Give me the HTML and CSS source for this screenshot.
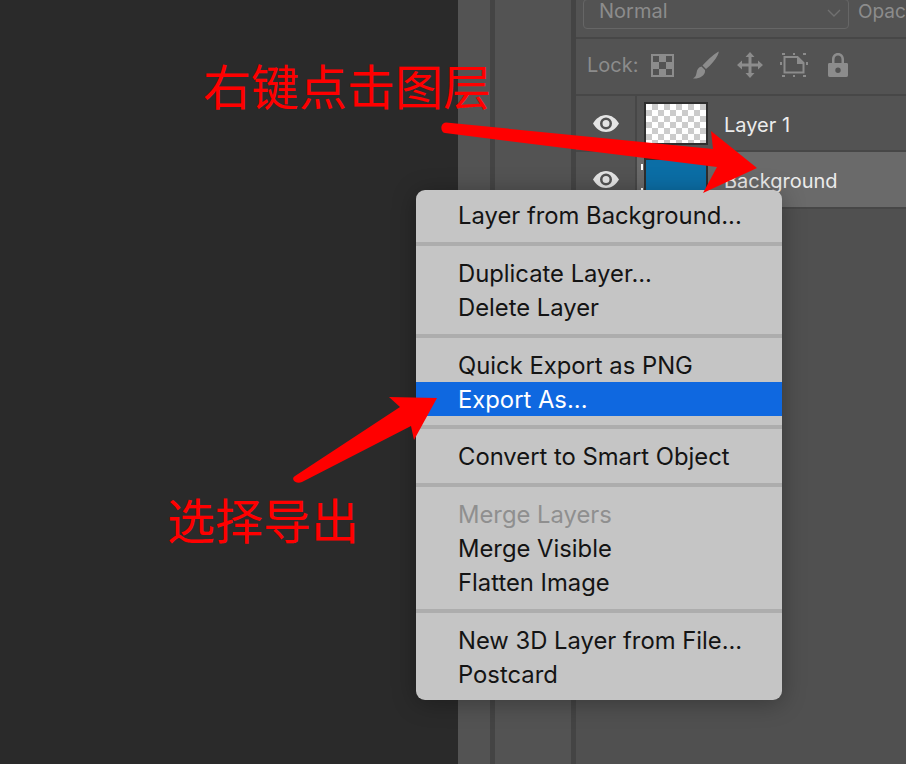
FILE: index.html
```html
<!DOCTYPE html>
<html lang="en">
<head>
    <meta charset="UTF-8">
    <meta name="viewport" content="width=device-width, initial-scale=1.0">
    <title>Export layer</title>
    <link rel="stylesheet" href="styles.css">
</head>
<body>
    <div class="workspace">
        <div class="canvas"></div>
        <div class="strip strip-narrow"></div>
        <div class="strip strip-wide"></div>
        <div class="panel">
            <div class="blend-row">
                <div class="blend-select">
                    <span>Normal</span>
                    <svg class="chevron" width="14" height="8" viewBox="0 0 14 8"><path d="M1 1l6 6 6-6" fill="none" stroke="#707070" stroke-width="1.4"/></svg>
                </div>
                <span class="opacity-label">Opac</span>
            </div>
            <div class="lock-row">
                <span class="lock-label">Lock:</span>
                <div class="lock-cell">
                    <svg width="23" height="23" viewBox="0 0 23 23">
                        <path fill="#8c8c8c" fill-rule="evenodd" d="M0 0h23v23H0zM2 2v6h6V2zM15 2v6h6V2zM8 8v7h7V8zM2 15v6h6v-6zM15 15v6h6v-6z"/>
                    </svg>
                </div>
                <div class="lock-cell">
                    <svg width="26" height="28" viewBox="0 0 26 28">
                        <path fill="#8c8c8c" d="M25.500 0.500C26 1 25.500 2.500 24.500 4.500 22 9 18.500 13.500 13 18L9.500 14.500C14 9.500 19.500 4 25.500 0.500zM8.500 15.500L12 19C12.500 22 10.500 25 7 26.500 4.500 27.500 2.500 27.500 0 27.500 2.500 26 3 24.500 3.500 22 4 18.500 5.500 16 8.500 15.500z"/>
                    </svg>
                </div>
                <div class="lock-cell">
                    <svg width="26" height="26" viewBox="0 0 26 26">
                        <path fill="#8c8c8c" d="M13 0l4.500 5H14.500v6.500H21V8.500L26 13l-5 4.500V14.500H14.500V21h3L13 26l-4.500-5h3V14.500H5v3L0 13l5-4.500v3h6.500V5h-3z"/>
                    </svg>
                </div>
                <div class="lock-cell">
                    <svg width="28" height="24" viewBox="0 0 28 24">
                        <path fill="none" stroke="#8c8c8c" stroke-width="2" d="M4.500 4h13l6 6v9.500h-19z"/>
                        <path fill="#8c8c8c" d="M17 4h1l6 6v1h-7z"/>
                        <path fill="#8c8c8c" d="M2 0h3v2H2zM23 0h3v2h-3zM0 9h2v3H0zM26 9h2v3h-2zM2 22h3v2H2zM23 22h3v2h-3zM13 22h2v2h-2zM13 0h2v2h-2z"/>
                    </svg>
                </div>
                <div class="lock-cell">
                    <svg width="20" height="24" viewBox="0 0 20 24">
                        <path fill="#8c8c8c" fill-rule="evenodd" d="M4 10V6.500C4 2.500 6.500 0 10 0s6 2.500 6 6.500V10h2.500c1 0 1.500.5 1.500 1.500V22c0 1-.5 2-1.500 2h-17C.5 24 0 23 0 22V11.500C0 10.500.5 10 1.500 10zM6.500 10h7V6.500c0-2.500-1.500-4-3.500-4s-3.500 1.500-3.500 4zM10 14.500a2.700 2.700 0 1 0 0 5.400 2.700 2.700 0 0 0 0-5.400z"/>
                    </svg>
                </div>
            </div>
            <div class="layer-row">
                <div class="eye-cell">
                    <svg width="26" height="17" viewBox="0 0 26 17"><path fill="#e4e4e4" fill-rule="evenodd" d="M13 0c5.500 0 10 3.500 13 8.500-3 5-7.500 8.500-13 8.500S3 13.500 0 8.500C3 3.500 7.500 0 13 0zM13 2.500a6 6 0 1 0 0 12 6 6 0 0 0 0-12zM13 5a3.500 3.500 0 1 1 0 7 3.500 3.500 0 0 1 0-7z"/></svg>
                </div>
                <div class="thumb thumb-empty"></div>
                <span class="layer-name">Layer 1</span>
            </div>
            <div class="layer-row layer-active">
                <div class="eye-cell">
                    <svg width="26" height="17" viewBox="0 0 26 17"><path fill="#e4e4e4" fill-rule="evenodd" d="M13 0c5.500 0 10 3.500 13 8.500-3 5-7.500 8.500-13 8.500S3 13.500 0 8.500C3 3.500 7.500 0 13 0zM13 2.500a6 6 0 1 0 0 12 6 6 0 0 0 0-12zM13 5a3.500 3.500 0 1 1 0 7 3.500 3.500 0 0 1 0-7z"/></svg>
                </div>
                <div class="thumb thumb-blue"></div>
                <span class="layer-name">Background</span>
            </div>
        </div>
    </div>

    <div class="menu">
        <div class="menu-item">Layer from Background...</div>
        <div class="menu-sep"></div>
        <div class="menu-item">Duplicate Layer...</div>
        <div class="menu-item">Delete Layer</div>
        <div class="menu-sep"></div>
        <div class="menu-item">Quick Export as PNG</div>
        <div class="menu-item menu-selected">Export As...</div>
        <div class="menu-sep"></div>
        <div class="menu-item">Convert to Smart Object</div>
        <div class="menu-sep"></div>
        <div class="menu-item menu-disabled">Merge Layers</div>
        <div class="menu-item">Merge Visible</div>
        <div class="menu-item">Flatten Image</div>
        <div class="menu-sep"></div>
        <div class="menu-item">New 3D Layer from File...</div>
        <div class="menu-item">Postcard</div>
    </div>

    <!-- red annotations on top of the screenshot -->
    <svg class="arrows" width="906" height="764" viewBox="0 0 906 764">
        <path fill="#ff0000" d="M446 122.500L713 149L711 131L757 168L703 193L717 167L445 133C440 132 440 123 446 122.500z"/>
        <path fill="#ff0000" d="M437 398L414 440L411 426L302 482C296 485 290 479 295 476L400 407L389 397z"/>
    </svg>
    <div class="note note-top">右键点击图层</div>
    <div class="note note-bottom">选择导出</div>
</body>
</html>
```

FILE: styles.css
```css
html, body {
    margin: 0;
    padding: 0;
    height: 764px;
    overflow: hidden;
    background-color: #2a2a2a;
    font-family: Inter, "Liberation Sans", sans-serif;
}
.workspace {
    display: flex;
    height: 764px;
}
.canvas {
    width: 458px;
    background-color: #2a2a2a;
}
.strip {
    background-color: #535353;
    border-right: 5px solid #444444;
}
.strip-narrow {
    width: 32px;
}
.strip-wide {
    width: 76px;
}
.panel {
    flex: 1;
    min-width: 0;
    background-color: #505050;
}
.blend-row {
    display: flex;
    align-items: flex-start;
    gap: 9px;
    height: 37px;
    padding-left: 7px;
    background-color: #535353;
    border-bottom: 2px solid #474747;
}
.blend-select {
    display: flex;
    flex-shrink: 0;
    justify-content: space-between;
    align-items: center;
    box-sizing: border-box;
    width: 266px;
    height: 30px;
    margin-top: -1px;
    padding: 0 7px 6px 15px;
    border: 1px solid #666666;
    border-radius: 4px;
    color: #8c8c8c;
    font-size: 20px;
}
.chevron {
    margin-top: 4px;
}
.opacity-label {
    color: #8c8c8c;
    font-size: 19px;
    line-height: 23px;
    white-space: nowrap;
}
.lock-row {
    display: flex;
    align-items: center;
    box-sizing: border-box;
    height: 57px;
    padding: 0 0 3px 11px;
    background-color: #535353;
    border-bottom: 2px solid #474747;
}
.lock-label {
    color: #8c8c8c;
    font-size: 20px;
    width: 53px;
}
.lock-cell {
    display: flex;
    justify-content: center;
    width: 44px;
}
.layer-row {
    display: flex;
    align-items: center;
    height: 54px;
    background-color: #535353;
    border-bottom: 2px solid #474747;
}
.layer-active {
    background-color: #6a6a6a;
    height: 55px;
}
.eye-cell {
    display: flex;
    align-items: center;
    justify-content: center;
    box-sizing: border-box;
    width: 61px;
    height: 100%;
    background-color: #535353;
    border-right: 2px solid #474747;
}
.thumb {
    position: relative;
    box-sizing: border-box;
    width: 64px;
    height: 43px;
    margin-left: 7px;
    border: 2px solid #2e2e2e;
}
.thumb-empty {
    background: repeating-conic-gradient(#cccccc 0 25%, #ffffff 0 50%) 0 0 / 12px 12px;
}
.thumb-blue {
    background-color: #0b6ea6;
}
.thumb-blue::before, .thumb-blue::after {
    content: "";
    position: absolute;
    left: -5px;
    width: 2px;
    height: 6px;
    background-color: #ffffff;
}
.thumb-blue::before {
    top: 4px;
}
.thumb-blue::after {
    top: 28px;
}
.layer-name {
    margin: 3px 0 0 16px;
    color: #ececec;
    font-size: 20px;
}
.menu {
    position: absolute;
    left: 416px;
    top: 190px;
    box-sizing: border-box;
    width: 366px;
    height: 510px;
    padding-top: 9px;
    background-color: #c5c5c5;
    border-radius: 9px;
    box-shadow: 0 3px 24px rgba(0, 0, 0, 0.3);
}
.menu-item {
    height: 34px;
    padding-left: 42px;
    line-height: 34px;
    color: #141414;
    font-size: 23.8px;
    white-space: nowrap;
}
.menu-selected {
    margin: -1px 0 1px;
    line-height: 36px;
    background-color: #0f68e0;
    color: #ffffff;
}
.menu-disabled {
    color: #8f8f8f;
}
.menu-sep {
    height: 4px;
    margin: 9px 0 11px;
    background-color: #adadad;
}
.arrows {
    position: absolute;
    left: 0;
    top: 0;
}
.note {
    position: absolute;
    color: #ff0000;
    font-family: "Noto Sans CJK SC", sans-serif;
    font-size: 48px;
    line-height: 54px;
    font-weight: 400;
    white-space: nowrap;
}
.note-top {
    left: 203px;
    top: 57px;
}
.note-bottom {
    left: 167px;
    top: 491px;
}
```
